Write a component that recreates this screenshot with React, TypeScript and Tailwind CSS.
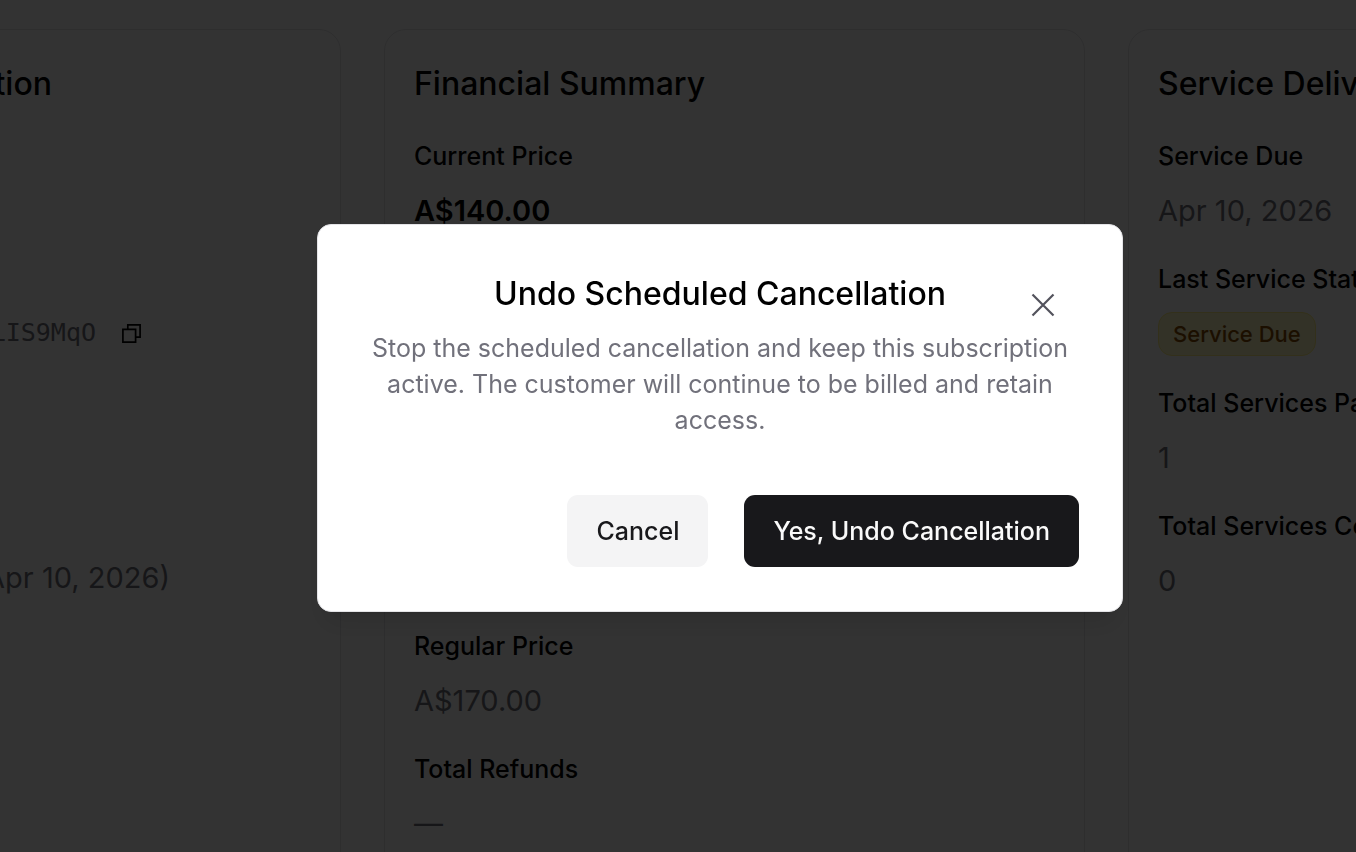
import React from 'react';

interface CardProps {
  title: string;
  titleClassName?: string;
  children: React.ReactNode;
}

interface FieldProps {
  label: string;
  children: React.ReactNode;
  className?: string;
}

const Card: React.FC<CardProps> = ({ title, titleClassName = '', children }) => (
  <section className="min-h-[900px] rounded-[22px] border border-zinc-200 bg-white p-[29px]">
    <h2 className={`whitespace-nowrap text-[32px] leading-[50px] font-medium ${titleClassName}`}>{title}</h2>
    {children}
  </section>
);

const Field: React.FC<FieldProps> = ({ label, children, className = 'mt-[29px]' }) => (
  <div className={className}>
    <dt className="whitespace-nowrap text-[25px] leading-9 font-medium">{label}</dt>
    <dd className="mt-[15px] text-[29px] leading-[43px] text-zinc-500">{children}</dd>
  </div>
);

const CopyIcon = () => (
  <svg width="19" height="19" viewBox="0 0 19 19" fill="none" stroke="currentColor" strokeWidth="1.7">
    <path d="M.9 5.4h12.7v12.7H.9z" />
    <path d="M5.8 5.4V.9h12.3v12.3h-4.5" />
  </svg>
);

const CloseIcon = () => (
  <svg width="24" height="24" viewBox="0 0 24 24" fill="none" stroke="currentColor" strokeWidth="2.2">
    <path d="M1.5 1.5l21 21M22.5 1.5l-21 21" />
  </svg>
);

export default function App() {
  return (
    <div className="h-screen overflow-hidden bg-white font-['Inter',sans-serif] text-black">
      <main className="-mr-[473px] -ml-[360px] grid grid-cols-3 gap-[43px] pt-[29px]">
        <Card title="Subscription Information" titleClassName="w-[382px] text-right">
          <div className="mt-[202px] flex h-11 w-[471px] items-center justify-end gap-[26px]">
            <span className="font-['DejaVu_Sans_Mono',monospace] text-[25px] text-zinc-500">LIS9MqO</span>
            <button type="button" aria-label="Copy subscription ID">
              <CopyIcon />
            </button>
          </div>
          <p className="mt-[201px] w-[500px] text-right text-[29px] leading-[44px] text-zinc-500">(Apr 10, 2026)</p>
        </Card>

        <Card title="Financial Summary">
          <dl>
            <Field label="Current Price">
              <span className="font-semibold text-black">A$140.00</span>
            </Field>
            <Field label="Regular Price" className="mt-[396px]">A$170.00</Field>
            <Field label="Total Refunds">—</Field>
          </dl>
        </Card>

        <Card title="Service Delivery">
          <dl>
            <Field label="Service Due">Apr 10, 2026</Field>
            <Field label="Last Service Status">
              <span className="flex w-fit rounded-[14px] border border-yellow-200 bg-yellow-100 px-3.5 text-[22px] leading-[42px] font-medium text-yellow-800">
                Service Due
              </span>
            </Field>
            <Field label="Total Services Paid">1</Field>
            <Field label="Total Services Completed">0</Field>
          </dl>
        </Card>
      </main>

      <div className="fixed inset-0 flex items-center justify-center bg-black/80 pb-4 pl-[84px]">
        <div
          role="dialog"
          aria-modal="true"
          aria-labelledby="dialog-title"
          aria-describedby="dialog-description"
          className="relative w-full max-w-[806px] rounded-[14px] border border-zinc-200 bg-white px-[43px] py-11 shadow-[0_18px_27px_-5px_rgb(0_0_0/0.1),0_7px_11px_-7px_rgb(0_0_0/0.1)]"
        >
          <h2 id="dialog-title" className="text-center text-[32px] leading-[50px] font-medium">
            Undo Scheduled Cancellation
          </h2>
          <p id="dialog-description" className="mt-[11px] text-center text-[25px] leading-9 text-zinc-500">
            Stop the scheduled cancellation and keep this subscription active. The customer will continue to be billed and
            retain access.
          </p>
          <div className="mt-[57px] flex justify-end gap-9">
            <button type="button" className="h-[72px] rounded-[11px] bg-zinc-100 px-[29px] text-[25px] leading-9 font-medium text-zinc-900">
              Cancel
            </button>
            <button type="button" className="h-[72px] rounded-[11px] bg-zinc-900 px-[29px] text-[25px] leading-9 font-medium text-zinc-50">
              Yes, Undo Cancellation
            </button>
          </div>
          <button type="button" aria-label="Close" className="absolute top-[68px] right-[67px] text-zinc-600">
            <CloseIcon />
          </button>
        </div>
      </div>
    </div>
  );
}
